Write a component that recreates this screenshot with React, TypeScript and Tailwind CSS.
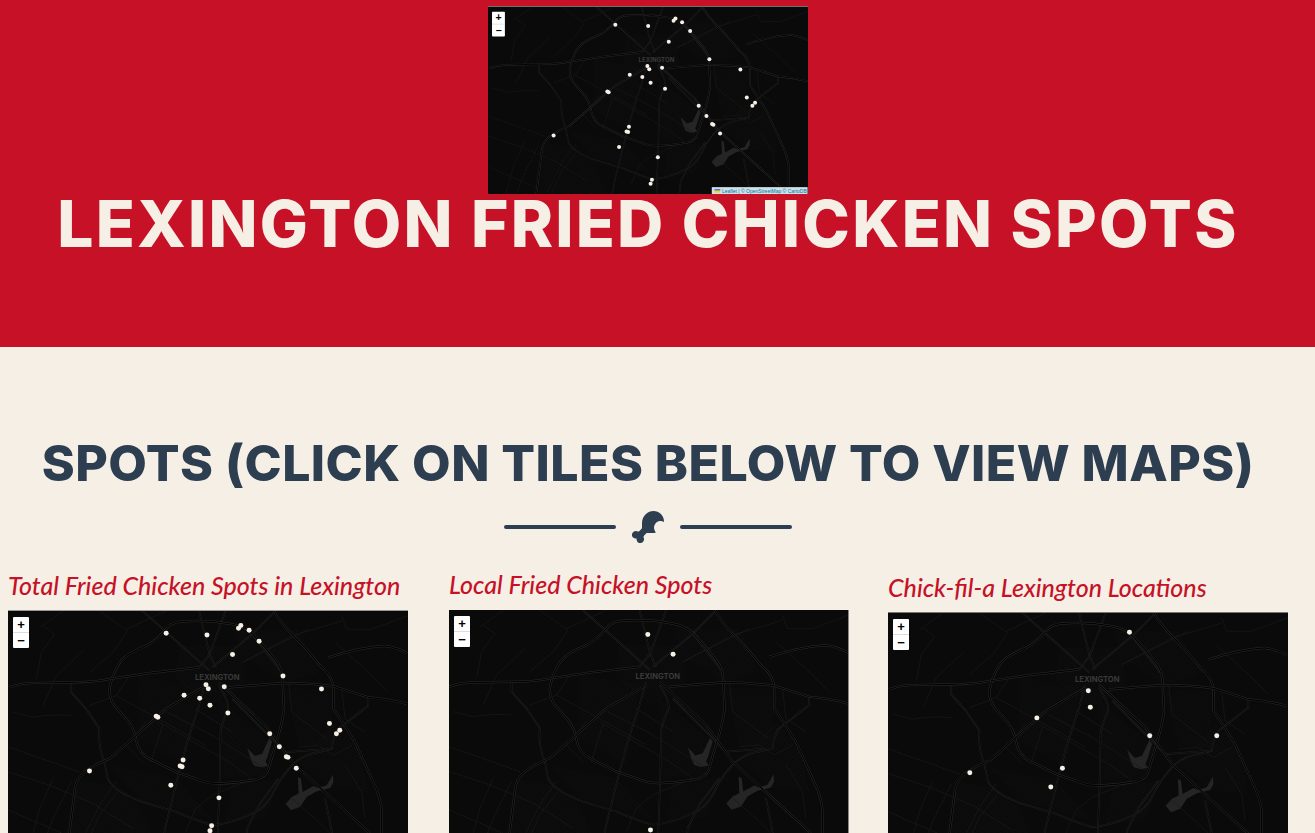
import { FaDrumstickBite } from "react-icons/fa";

type Point = [number, number];

// all map coordinates are in a 1200x705 space (3 units per screen pixel at full size)
const majorRoads = [
  "M500 190 Q515 170 545 167 Q620 160 700 175 Q740 182 765 208 Q800 245 835 290 Q852 315 852 350 L856 430 Q850 480 830 540 L808 615 Q800 635 770 643 Q720 652 660 655 Q620 655 590 640 L530 620 L450 580 Q420 565 412 530 Q405 490 385 465 L345 420 Q325 390 332 360 Q340 320 365 285 Q385 262 440 240 Q470 225 500 190",
  "M825 135 Q850 175 880 205 Q930 255 965 300 Q1005 330 1005 370 L1005 430 Q1040 480 1070 530 L1120 640 Q1150 700 1150 740 L1150 840",
  "M27 365 Q60 352 110 352 L215 350 Q280 350 330 340 L450 322 L600 305",
  "M690 365 L850 352 Q930 352 1005 362 L1110 395 Q1170 400 1227 415",
  "M620 360 L500 430 L410 510 L330 580 Q290 595 255 620 Q225 645 225 680 L205 840",
  "M660 350 L800 480 L880 590 L1000 700 L1110 800 L1140 840",
  "M990 275 Q1080 245 1160 240 Q1195 245 1227 262",
];

const mediumRoads = [
  "M600 135 L632 265 L650 305",
  "M680 135 L632 265 L600 305",
  "M430 135 L520 215 L632 315",
  "M830 135 Q790 175 760 205 L640 305",
  "M620 350 L600 420 L560 545 L535 640 L500 780 L488 840",
  "M660 360 Q690 405 688 430 Q670 470 665 495 L662 650 L655 840",
  "M215 350 L215 380 L260 430 L300 490 Q295 540 315 590 L325 640 Q345 680 430 710 L530 740 Q600 770 640 780 Q700 775 760 745 Q800 730 825 680 Q850 630 880 600 Q915 565 960 560 L1000 550 Q1005 510 1020 490 L1110 420 L1110 395",
  "M760 205 L850 320",
  "M700 400 L860 560 L1000 550",
  "M980 700 L1000 800 L1010 840",
  "M840 640 L780 720 L745 790 L740 840",
];

const faintRoads = [
  "M130 180 L165 205 L125 260 L110 340",
  "M190 135 L120 185",
  "M300 135 L385 195 L340 260 L270 320",
  "M380 190 L500 135",
  "M215 450 Q150 445 100 455 L40 440",
  "M255 250 L170 330 L130 420",
  "M270 420 L350 390 L390 330",
  "M1030 150 L1045 190 L1120 190 L1227 150",
  "M730 290 L880 210 L1030 165",
  "M870 350 L880 440 L985 520",
  "M1010 230 L1100 310 L1170 380",
  "M1030 370 L1040 460 L1100 500",
  "M440 470 L380 540 L430 590",
  "M355 680 L300 750 L260 840",
  "M160 640 L120 730 L90 840",
  "M560 800 L590 730 L640 690 L760 640",
  "M900 545 L960 540 L1005 570 L1060 540",
  "M880 700 L960 770 L1010 820",
  "M480 470 L690 590 L760 640",
  "M505 440 L640 510 L800 610",
  "M350 390 L460 450 L620 540",
  "M1040 600 L1090 680 L1100 760",
];

const dottedRoads = [
  "M27 545 L240 620",
  "M27 620 L150 660 L280 715 L400 790",
  "M27 735 L200 810",
  "M215 650 L160 760 L130 840",
  "M350 650 L300 720 L240 840",
  "M490 480 L455 590",
  "M590 430 L700 500",
  "M730 290 L930 190",
];

const cityBlocks = [
  "M540 240 L730 240 L740 350 L640 420 L530 340 Z",
  "M420 330 L600 360 L560 600 L420 520 Z",
  "M660 400 L830 540 L790 630 L670 640 Z",
  "M700 190 L900 190 L960 320 L860 350 L740 280 Z",
  "M860 370 L1000 370 L1000 540 L900 540 Z",
  "M330 600 L530 640 L640 760 L420 700 Z",
  "M700 660 L840 640 L800 760 L680 770 Z",
  "M1010 470 L1080 540 L1110 680 L1000 670 L900 590 Z",
  "M230 640 L330 660 L420 720 L470 840 L190 840 Z",
];

const lakes = [
  "M745 547 L768 572 L790 565 L812 518 L820 530 L806 575 L800 590 L808 602 L785 606 L765 600 L757 585 Z",
  "M898 635 L907 640 L912 680 L945 662 L958 668 L985 660 L1003 628 L1005 650 L995 668 L955 678 L925 695 L905 725 L877 735 L861 716 L880 695 L900 685 Z",
];

const allSpots: Point[] = [
  [501, 202], [624, 207], [726, 179], [719, 187], [751, 193], [781, 226], [701, 266], [853, 331], [969, 370],
  [621, 357], [628, 369], [676, 363], [555, 389], [602, 398], [633, 419], [687, 442], [471, 452], [476, 455],
  [813, 505], [993, 474], [1024, 494], [1014, 505], [842, 544], [863, 574], [868, 576], [893, 609], [552, 584],
  [543, 602], [549, 604], [270, 617], [515, 660], [660, 698], [638, 782], [633, 797],
];

const localSpots: Point[] = [[625, 208], [701, 267], [633, 796]];

const chickFilASpots: Point[] = [
  [752, 193], [628, 369], [634, 419], [473, 451], [813, 505], [1015, 505], [550, 603], [271, 616], [515, 659],
];

const LeafletMap: React.FC<{ spots: Point[]; idSuffix: string; className?: string; attribution?: boolean }> = ({
  spots,
  idSuffix,
  className,
  attribution,
}) => (
  <div className={`relative w-[400px] h-[235px] overflow-hidden bg-[#0a0a0a] ${className ?? ""}`}>
    <svg viewBox="27 135 1200 705" className="block w-full h-full">
      <defs>
        <pattern id={`streets-${idSuffix}`} width="9" height="9" patternUnits="userSpaceOnUse" patternTransform="rotate(28)">
          <path d="M0 0H9M0 0V9" stroke="#161616" strokeWidth="1" fill="none" />
        </pattern>
      </defs>
      {cityBlocks.map((d) => (
        <path key={d} d={d} fill={`url(#streets-${idSuffix})`} />
      ))}
      {lakes.map((d) => (
        <path key={d} d={d} fill="#252525" />
      ))}
      {faintRoads.map((d) => (
        <path key={d} d={d} fill="none" stroke="#1a1a1a" strokeWidth="2" />
      ))}
      {dottedRoads.map((d) => (
        <path key={d} d={d} fill="none" stroke="#1f1f1f" strokeWidth="3" strokeDasharray="3 3" />
      ))}
      {mediumRoads.map((d) => (
        <g key={d} fill="none">
          <path d={d} stroke="#262626" strokeWidth="5" />
          <path d={d} stroke="#050505" strokeWidth="2.5" />
        </g>
      ))}
      {majorRoads.map((d) => (
        <g key={d} fill="none">
          <path d={d} stroke="#2c2c2c" strokeWidth="6.5" />
          <path d={d} stroke="#020202" strokeWidth="3.5" />
        </g>
      ))}
      <text x="655" y="342" textAnchor="middle" fontSize="23" fontWeight="700" fill="#3a3a3a" fontFamily="Inter, sans-serif">
        LEXINGTON
      </text>
      {spots.map(([x, y]) => (
        <circle key={`${x}-${y}`} cx={x} cy={y} r="7.5" fill="#f7f0e6" />
      ))}
    </svg>
    <div className="absolute left-[5px] top-[6px] w-4 rounded-[1px] bg-white text-black font-['Liberation_Sans',sans-serif] font-bold text-[13px] leading-[15px] text-center">
      <div className="h-[16px] border-b border-[#ddd]">+</div>
      <div className="h-[15px]">−</div>
    </div>
    {attribution && (
      <div className="absolute right-[3px] bottom-[1px] h-[9px] w-[119px] flex items-center justify-end gap-[2px] bg-[#cfe0e6] pr-[1px] text-[6.2px] leading-[9px] whitespace-nowrap text-[#0078a8] font-['Liberation_Sans',sans-serif]">
        <svg viewBox="0 0 12 8" className="w-[8px] h-[5px] shrink-0">
          <path d="M0 0H12V4H0Z" fill="#4c7be1" />
          <path d="M0 4H12V8H0Z" fill="#ffd500" />
        </svg>
        <span>Leaflet | © OpenStreetMap © CartoDB</span>
      </div>
    )}
  </div>
);

const SpotTile: React.FC<{ title: string; spots: Point[]; idSuffix: string; className: string; mapClassName: string }> = ({
  title,
  spots,
  idSuffix,
  className,
  mapClassName,
}) => (
  <div className={className}>
    <h3 className="font-['Lato',sans-serif] italic font-medium text-[25px] leading-[29px] text-[#c61126] whitespace-nowrap">
      {title}
    </h3>
    <LeafletMap spots={spots} idSuffix={idSuffix} className={mapClassName} />
  </div>
);

export default function App() {
  return (
    <div className="h-[833px] overflow-hidden bg-[#f6efe6]">
      <header className="h-[347px] bg-[#c61126]">
        <div className="w-[1296px] flex flex-col items-center pt-[6px]">
          <div className="w-[320px] h-[188px] overflow-hidden">
            <div className="origin-top-left scale-[0.805]">
              <LeafletMap spots={allSpots} idSuffix="hero" attribution className="border-t border-[#8a8a8a]" />
            </div>
          </div>
          <h1 className="font-['Inter',sans-serif] font-extrabold text-[64px] leading-[58px] mt-[1px] tracking-[2.25px] text-[#f6efe6] whitespace-nowrap">
            LEXINGTON FRIED CHICKEN SPOTS
          </h1>
        </div>
      </header>
      <section className="w-[1296px] flex flex-col items-center pt-[86px]">
        <h2 className="font-['Inter',sans-serif] font-extrabold text-[50px] leading-[60px] tracking-[0.46px] text-[#2c3e50] whitespace-nowrap">
          SPOTS (CLICK ON TILES BELOW TO VIEW MAPS)
        </h2>
        <div className="flex items-center gap-4 mt-[18px]">
          <div className="w-28 h-1 rounded-full bg-[#2c3e50]" />
          <FaDrumstickBite className="w-8 h-8 text-[#2c3e50]" />
          <div className="w-28 h-1 rounded-full bg-[#2c3e50]" />
        </div>
      </section>
      <div className="flex items-start pl-2 gap-[41px] mt-[12px]">
        <SpotTile title="Total Fried Chicken Spots in Lexington" spots={allSpots} idSuffix="all" className="w-[400px] mt-[16px]" mapClassName="border-t border-[#999] mt-[10px]" />
        <SpotTile title="Local Fried Chicken Spots" spots={localSpots} idSuffix="local" className="w-[400px] mt-[15px]" mapClassName="border-r border-[#888] mt-[11px]" />
        <SpotTile title="Chick-fil-a Lexington Locations" spots={chickFilASpots} idSuffix="cfa" className="w-[400px] mt-[18px] ml-[-2px]" mapClassName="border-t border-[#777] mt-[10px]" />
      </div>
    </div>
  );
}
